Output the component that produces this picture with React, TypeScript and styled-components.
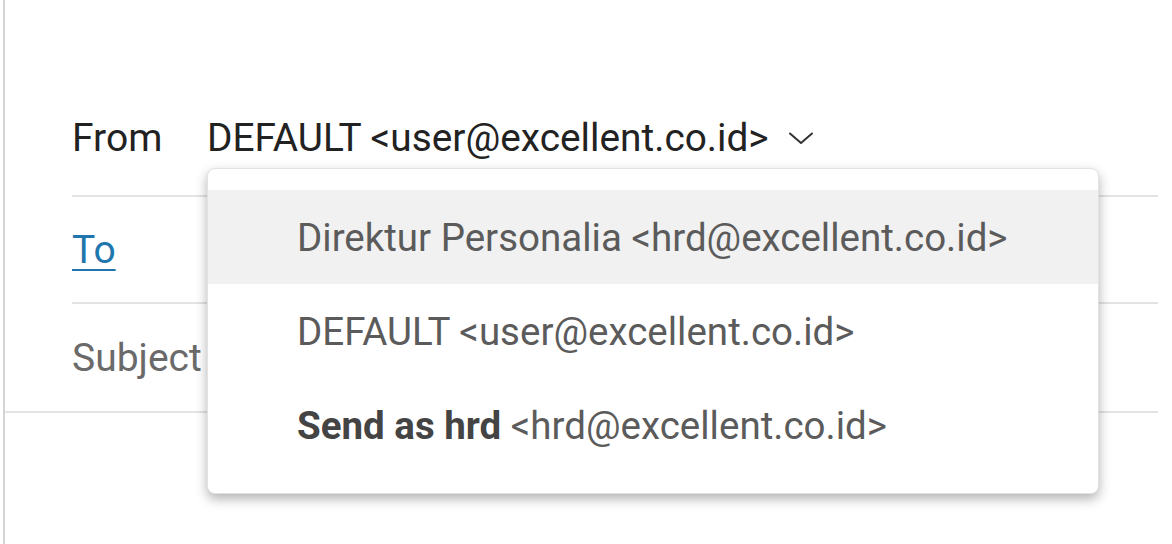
import React from "react";
import styled, { createGlobalStyle } from "styled-components";

const Global = createGlobalStyle`
  html, body { margin: 0; padding: 0; background: #fff; }
  body { font-family: Roboto, "Liberation Sans", Arial, sans-serif; }
`;

const Page = styled.div`
  width: 1172px;
  height: 544px;
  box-sizing: border-box;
  padding-left: 3px;
  overflow: hidden;
`;

const Pane = styled.div`
  height: 100%;
  border-left: 2px solid #d4d4d4;
  padding-top: 80px;
  box-sizing: border-box;
`;

const Form = styled.div`
  margin-right: 14px;
  border-bottom: 2px solid #e3e3e3;
`;

const Row = styled.div<{ $last?: boolean }>`
  position: relative;
  margin-left: 67px;
  height: 107px;
  display: flex;
  align-items: center;
  border-bottom: ${(p) => (p.$last ? "none" : "2px solid #e3e3e3")};
  box-sizing: border-box;
`;

const FromRow = styled(Row)`
  height: 117px;
  align-items: flex-start;
  padding-top: 35px;
`;

const Label = styled.span<{ $tone?: "dark" | "link" | "muted" }>`
  font-size: 39px;
  width: 135px;
  flex: none;
  color: ${(p) =>
    p.$tone === "link" ? "#1f76ad" : p.$tone === "muted" ? "#6a6a6a" : "#222"};
  text-decoration: ${(p) => (p.$tone === "link" ? "underline" : "none")};
  text-underline-offset: 6px;
  text-decoration-thickness: 2px;
`;

const FromValue = styled.div`
  display: flex;
  align-items: center;
  gap: 19px;
  font-size: 38.8px;
  color: #222;
`;

const Menu = styled.div`
  position: absolute;
  left: 135px;
  top: 88px;
  width: 892px;
  background: #fff;
  border: 1px solid #e2e2e2;
  border-radius: 8px;
  box-shadow: 0 5px 12px rgba(0, 0, 0, 0.3);
  padding: 21px 0;
  box-sizing: border-box;
  z-index: 2;
`;

const Item = styled.div<{ $active?: boolean }>`
  height: 94px;
  display: flex;
  align-items: center;
  padding-left: 89px;
  font-size: 38.5px;
  color: #5b5b5b;
  background: ${(p) => (p.$active ? "#f1f1f1" : "transparent")};
  b {
    color: #444;
    font-weight: 700;
  }
`;

const Chevron = () => (
  <svg width="26" height="14" viewBox="0 0 26 14" fill="none">
    <path d="M2 2.5 L13 12 L24 2.5" stroke="#333" strokeWidth="2" strokeLinecap="round" strokeLinejoin="round" />
  </svg>
);

export default function App() {
  return (
    <Page>
      <Global />
      <Pane>
        <Form>
          <FromRow>
            <Label $tone="dark">From</Label>
            <FromValue>
              <span>DEFAULT &lt;user@excellent.co.id&gt;</span>
              <Chevron />
            </FromValue>
            <Menu>
              <Item $active>Direktur Personalia &lt;hrd@excellent.co.id&gt;</Item>
              <Item>DEFAULT &lt;user@excellent.co.id&gt;</Item>
              <Item>
                <b>Send as hrd</b>&nbsp;&lt;hrd@excellent.co.id&gt;
              </Item>
            </Menu>
          </FromRow>
          <Row>
            <Label $tone="link">To</Label>
          </Row>
          <Row $last>
            <Label $tone="muted">Subject</Label>
          </Row>
        </Form>
      </Pane>
    </Page>
  );
}
